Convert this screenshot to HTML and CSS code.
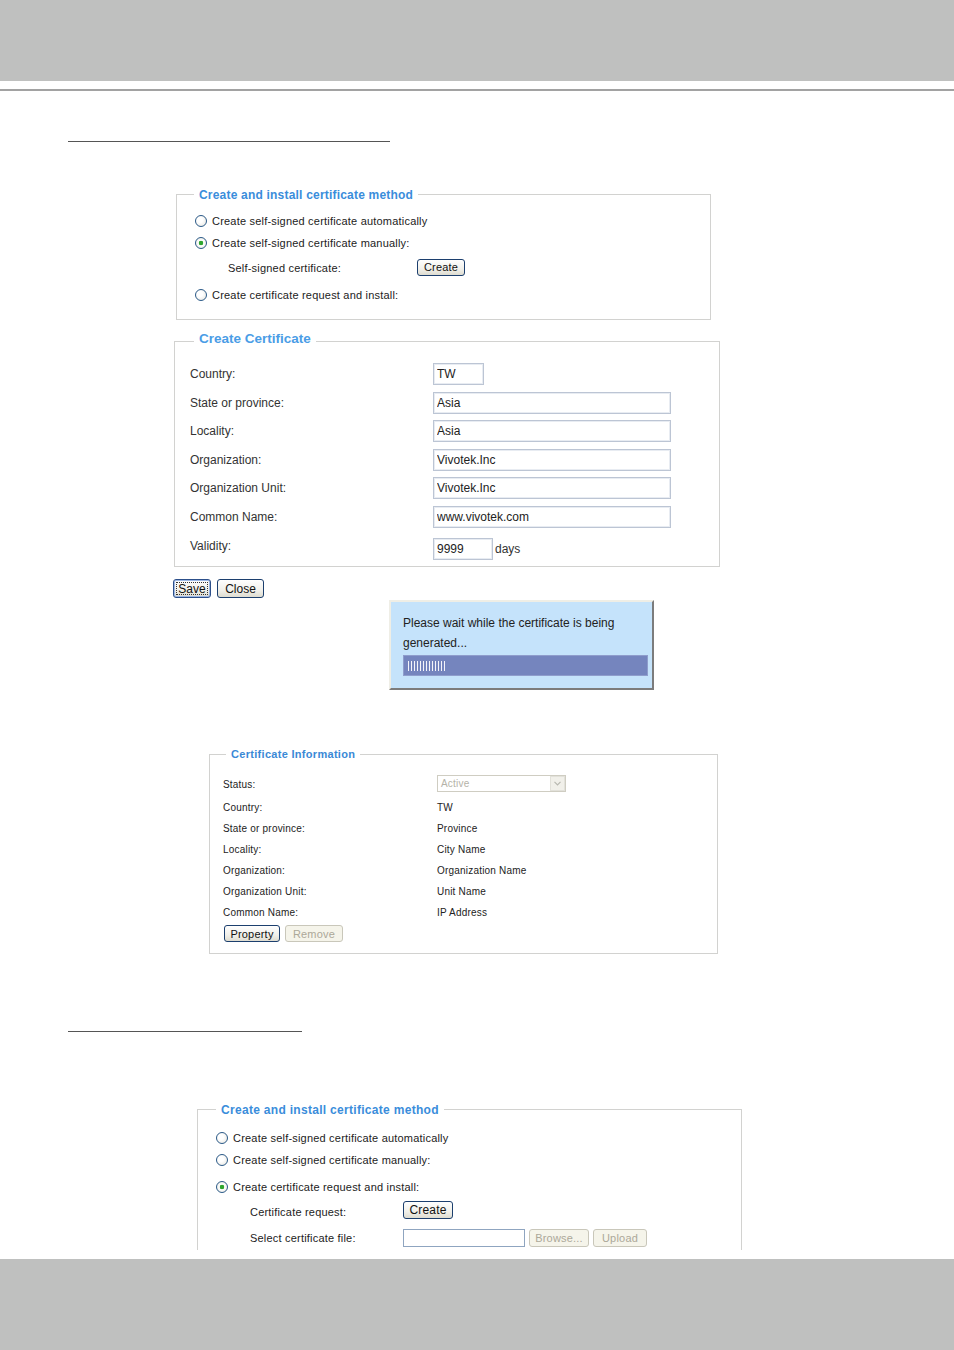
FILE: index.html
```html
<!DOCTYPE html>
<html lang="en">
<head>
    <meta charset="UTF-8">
    <title>HTTPS certificate</title>
    <link rel="stylesheet" href="styles.css">
</head>
<body>
    <div class="topbar"></div>
    <div class="toprule"></div>

    <main class="doc">
        <div class="heading-rule rule-a"></div>

        <section class="group method-a">
            <div class="group-title">Create and install certificate method</div>
            <div class="opts">
                <label class="opt"><input type="radio" name="m1" class="radio"> Create self-signed certificate automatically</label>
                <label class="opt"><input type="radio" name="m1" class="radio" checked> Create self-signed certificate manually:</label>
                <div class="sub sub-a">
                    <span class="sub-label">Self-signed certificate:</span>
                    <button class="btn btn-create">Create</button>
                </div>
                <label class="opt opt-last"><input type="radio" name="m1" class="radio"> Create certificate request and install:</label>
            </div>
        </section>

        <section class="group create-cert">
            <div class="group-title">Create Certificate</div>
            <div class="form">
                <div class="field"><span class="field-label">Country:</span><input class="text w-country" value="TW"></div>
                <div class="field"><span class="field-label">State or province:</span><input class="text w-long" value="Asia"></div>
                <div class="field"><span class="field-label">Locality:</span><input class="text w-long" value="Asia"></div>
                <div class="field"><span class="field-label">Organization:</span><input class="text w-long" value="Vivotek.Inc"></div>
                <div class="field"><span class="field-label">Organization Unit:</span><input class="text w-long" value="Vivotek.Inc"></div>
                <div class="field"><span class="field-label">Common Name:</span><input class="text w-long" value="www.vivotek.com"></div>
                <div class="field field-validity"><span class="field-label">Validity:</span><input class="text w-days" value="9999"><span class="unit">days</span></div>
            </div>
        </section>

        <div class="actions">
            <button class="btn btn-save">Save</button>
            <button class="btn btn-close">Close</button>
        </div>

        <div class="wait-box">
            <p>Please wait while the certificate is being generated...</p>
            <div class="progress"><div class="progress-ticks"></div></div>
        </div>

        <section class="group cert-info">
            <div class="group-title">Certificate Information</div>
            <div class="info">
                <div class="info-row info-status">
                    <span class="info-label">Status:</span>
                    <div class="select-off"><span>Active</span><span class="select-arrow">
                        <svg width="7" height="5" viewBox="0 0 7 5"><path d="M0.5 0.8 L3.5 3.8 L6.5 0.8" fill="none" stroke="#b8b8b0" stroke-width="1.2"/></svg>
                    </span></div>
                </div>
                <div class="info-row"><span class="info-label">Country:</span><span>TW</span></div>
                <div class="info-row"><span class="info-label">State or province:</span><span>Province</span></div>
                <div class="info-row"><span class="info-label">Locality:</span><span>City Name</span></div>
                <div class="info-row"><span class="info-label">Organization:</span><span>Organization Name</span></div>
                <div class="info-row"><span class="info-label">Organization Unit:</span><span>Unit Name</span></div>
                <div class="info-row"><span class="info-label">Common Name:</span><span>IP Address</span></div>
                <div class="info-buttons">
                    <button class="btn btn-property">Property</button>
                    <button class="btn btn-off btn-remove" disabled>Remove</button>
                </div>
            </div>
        </section>

        <div class="heading-rule rule-b"></div>

        <section class="group method-b">
            <div class="group-title">Create and install certificate method</div>
            <div class="opts">
                <label class="opt"><input type="radio" name="m2" class="radio"> Create self-signed certificate automatically</label>
                <label class="opt"><input type="radio" name="m2" class="radio"> Create self-signed certificate manually:</label>
                <label class="opt opt-gap"><input type="radio" name="m2" class="radio" checked> Create certificate request and install:</label>
                <div class="sub sub-b">
                    <span class="sub-label">Certificate request:</span>
                    <button class="btn btn-create2">Create</button>
                </div>
                <div class="sub sub-b sub-file">
                    <span class="sub-label">Select certificate file:</span>
                    <input class="file-path">
                    <button class="btn btn-off btn-browse" disabled>Browse...</button>
                    <button class="btn btn-off btn-upload" disabled>Upload</button>
                </div>
            </div>
        </section>
    </main>

    <div class="bottombar"></div>
</body>
</html>
```

FILE: styles.css
```css
* {
    margin: 0;
    padding: 0;
    box-sizing: border-box;
}

body {
    background-color: #fff;
    color: #222;
    font-family: "Liberation Sans", Arial, sans-serif;
    width: 954px;
}

.topbar {
    height: 81px;
    background-color: #bfc0bf;
}

.toprule {
    height: 2px;
    margin-top: 8px;
    background-color: #a2a2a2;
}

.bottombar {
    height: 91px;
    margin-top: 9px;
    background-color: #bfc0bf;
}

.heading-rule {
    height: 1px;
    margin-left: 68px;
    background-color: #555;
}

.rule-a {
    width: 322px;
    margin-top: 50px;
}

.rule-b {
    width: 234px;
    margin-top: 77px;
}

/* boxes with a title sitting on the top border */
.group {
    border: 1px solid #d2d2d0;
}

.group-title {
    width: max-content;
    margin-top: -8px;
    padding: 0 5px;
    line-height: 16px;
    background-color: #fff;
    color: #3a8ddb;
    font-weight: bold;
    font-size: 12px;
    letter-spacing: 0.2px;
}

.method-a {
    width: 535px;
    margin: 52px 0 0 176px;
}

.method-a .group-title {
    margin-left: 17px;
}

.method-b {
    width: 545px;
    margin: 77px 0 0 197px;
    border-bottom: none;
}

.method-b .group-title {
    margin-left: 18px;
    letter-spacing: 0.3px;
}

.opts {
    display: flex;
    flex-direction: column;
    padding-left: 18px;
    font-size: 11px;
    letter-spacing: 0.2px;
    color: #222;
}

.method-a .opts {
    padding-top: 7px;
    padding-bottom: 13px;
}

.method-b .opts {
    padding-top: 9px;
    padding-bottom: 1px;
}

.opt {
    display: flex;
    align-items: center;
    gap: 5px;
    height: 22px;
}

.opt-last {
    margin-top: 4px;
}

.opt-gap {
    margin-top: 5px;
}

.radio {
    appearance: none;
    width: 12px;
    height: 12px;
    border: 1px solid #2b5a88;
    border-radius: 50%;
    background: radial-gradient(circle at 40% 40%, #fff 0 30%, #e4e3dc 100%);
}

.radio:checked {
    background: radial-gradient(circle, #2fa52f 0 2px, #fff 2.6px 35%, #e4e3dc 100%);
}

.sub {
    display: flex;
    align-items: center;
}

.sub-a {
    height: 24px;
    margin-top: 2px;
    padding-left: 33px;
}

.sub-a .sub-label {
    width: 189px;
}

.sub-b {
    height: 22px;
    margin-top: 3px;
    padding-left: 34px;
}

.sub-b .sub-label {
    width: 153px;
}

.sub-file {
    margin-top: 4px;
    gap: 4px;
}

.sub-file .sub-label {
    margin-right: -4px;
}

/* XP looking buttons */
.btn {
    height: 17px;
    border: 1px solid #1c3f6e;
    border-radius: 3px;
    background: linear-gradient(#fefefe, #f1f0ea 60%, #dedcd0);
    font-family: "Liberation Sans", Arial, sans-serif;
    font-size: 11px;
    letter-spacing: 0.2px;
    color: #111;
}

.btn-off {
    border-color: #c9c7ba;
    background: #f5f4ea;
    color: #aca899;
}

.btn-create {
    width: 48px;
    margin-bottom: 2px;
}

.btn-create2 {
    width: 50px;
    height: 18px;
    margin-bottom: 4px;
    font-size: 12px;
}

.file-path {
    width: 122px;
    height: 18px;
    border: 1px solid #8fa5c0;
    background: #fff;
}

.btn-browse {
    width: 60px;
    height: 18px;
}

.btn-upload {
    width: 54px;
    height: 18px;
}

/* create certificate form */
.create-cert {
    width: 546px;
    margin: 21px 0 0 174px;
}

.create-cert .group-title {
    margin-top: -11px;
    margin-left: 19px;
    font-size: 13.5px;
    letter-spacing: 0;
    color: #4a9de6;
}

.form {
    padding: 13px 0 5px 15px;
    font-size: 12px;
    color: #333;
}

.field {
    display: flex;
    align-items: center;
    height: 28.5px;
}

.field-validity {
    height: 30px;
}

.field-label {
    width: 243px;
}

.text {
    height: 22px;
    padding-left: 3px;
    border: 1px solid #bcc5d4;
    box-shadow: inset 0 0 0 1px #e8ecf2;
    font-family: "Liberation Sans", Arial, sans-serif;
    font-size: 12px;
    color: #222;
    outline: none;
}

.w-country {
    width: 51px;
}

.w-long {
    width: 238px;
}

.w-days {
    width: 60px;
    margin-top: 6px;
}

.unit {
    margin: 6px 0 0 2px;
}

.actions {
    display: flex;
    gap: 6px;
    margin: 12px 0 0 173px;
}

.actions .btn {
    height: 19px;
    font-size: 12px;
    letter-spacing: 0;
}

.btn-save {
    width: 38px;
    border-color: #2c4f8a;
    box-shadow: 0 0 0 1px #9cb8e6 inset;
    outline: 1px dotted #333;
    outline-offset: -4px;
}

.btn-close {
    width: 47px;
}

/* waiting popup */
.wait-box {
    width: 265px;
    margin: 2px 0 0 389px;
    padding: 11px 4px 12px 12px;
    border: 2px solid;
    border-color: #efeee6 #7c7c7c #7c7c7c #efeee6;
    background-color: #c5e3fb;
    font-size: 12px;
    line-height: 20px;
    color: #222;
}

.progress {
    height: 21px;
    margin-top: 2px;
    padding: 5px 0 0 4px;
    background-color: #7585be;
    border: 1px solid #8f9dcc;
}

.progress-ticks {
    width: 37px;
    height: 10px;
    background: repeating-linear-gradient(90deg, #f4f4fa 0 1px, transparent 1px 3px);
}

/* certificate information */
.cert-info {
    width: 509px;
    margin: 64px 0 0 209px;
}

.cert-info .group-title {
    margin-top: -9px;
    margin-left: 16px;
    font-size: 11px;
    letter-spacing: 0.3px;
    color: #3a89d6;
}

.info {
    padding: 9px 0 11px 13px;
    font-size: 10px;
    letter-spacing: 0.2px;
    color: #222;
}

.info-row {
    display: flex;
    align-items: center;
    height: 21px;
}

.info-status {
    height: 26px;
}

.info-label {
    width: 214px;
}

.select-off {
    display: flex;
    justify-content: space-between;
    width: 129px;
    height: 17px;
    margin-bottom: 1px;
    border: 1px solid #cfcdc2;
    padding-left: 3px;
    line-height: 15px;
    color: #b5b3a8;
}

.select-arrow {
    display: flex;
    align-items: center;
    justify-content: center;
    width: 15px;
    border: 1px solid #e2e1da;
    background-color: #f1f0ea;
}

.info-buttons {
    display: flex;
    gap: 5px;
    margin-top: 2px;
    padding-left: 1px;
}

.btn-property {
    width: 56px;
}

.btn-remove {
    width: 58px;
}
```
